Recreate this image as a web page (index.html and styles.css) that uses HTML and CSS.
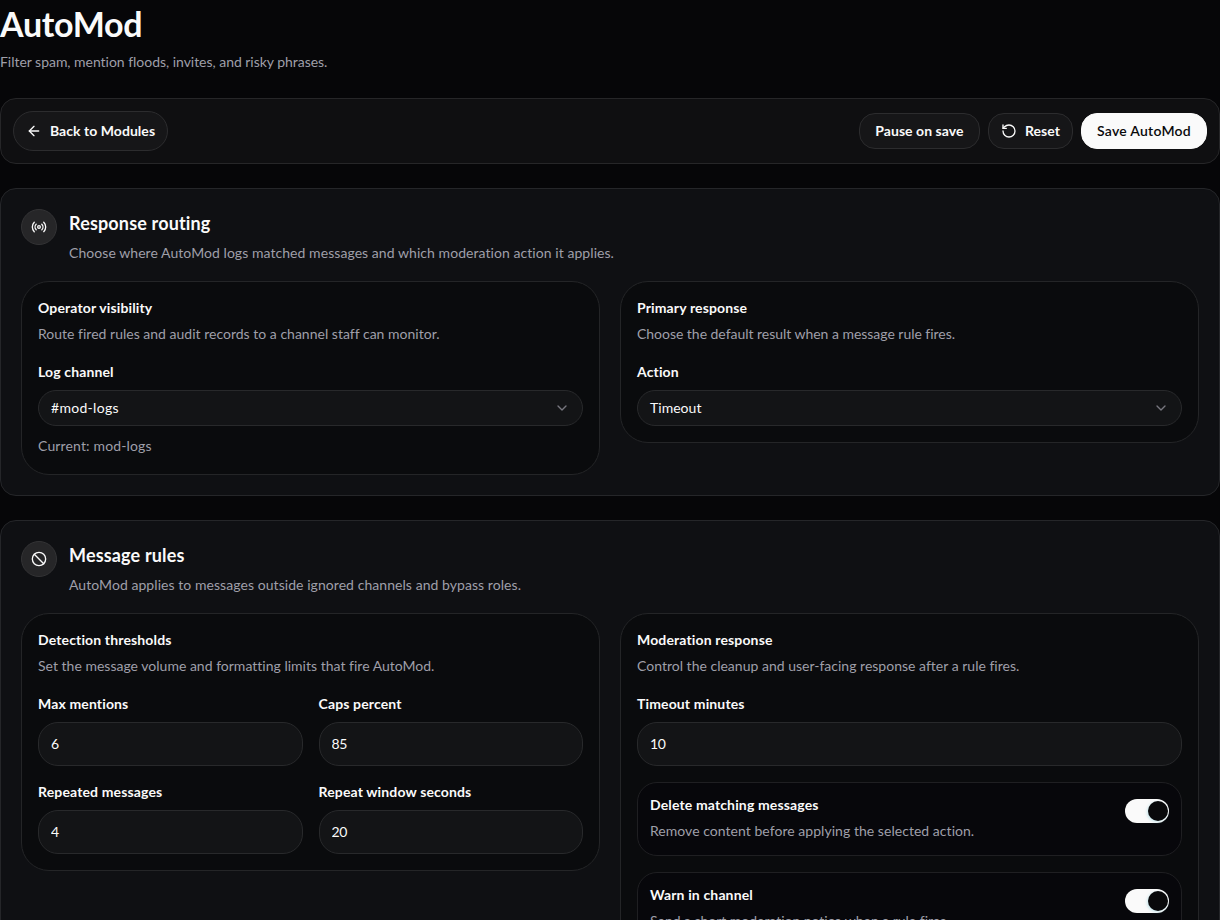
FILE: index.html
```
<!DOCTYPE html>
<html lang="en">

<head>
    <meta charset="utf-8">
    <meta name="viewport" content="width=device-width, initial-scale=1.0">
    <title>AutoMod</title>
    <link rel="stylesheet" href="styles.css">
</head>

<body>
    <header class="page-header">
        <h1>AutoMod</h1>
        <p class="filter-text">Filter spam, mention floods, invites, and risky phrases.</p>
    </header>

    <!-- toolbar -->
    <div class="toolbar">
        <a class="btn btn-back" href="#">
            <svg class="icon" viewBox="0 0 24 24"><path d="m12 19-7-7 7-7"/><path d="M19 12H5"/></svg>
            Back to Modules
        </a>
        <div class="toolbar-actions">
            <button class="btn" type="button">Pause on save</button>
            <button class="btn btn-reset" type="button">
                <svg class="icon" viewBox="0 0 24 24"><path d="M3 12a9 9 0 1 0 9-9 9.75 9.75 0 0 0-6.74 2.74L3 8"/><path d="M3 3v5h5"/></svg>
                Reset
            </button>
            <button class="btn btn-primary" type="button">Save AutoMod</button>
        </div>
    </div>

    <!-- response routing -->
    <section class="section">
        <div class="section-header">
            <div class="section-icon">
                <svg class="icon" viewBox="0 0 24 24"><path d="M4.9 19.1C1 15.2 1 8.8 4.9 4.9"/><path d="M7.8 16.2c-2.3-2.3-2.3-6.1 0-8.5"/><circle cx="12" cy="12" r="2"/><path d="M16.2 7.8c2.3 2.3 2.3 6.1 0 8.5"/><path d="M19.1 4.9C23 8.8 23 15.1 19.1 19"/></svg>
            </div>
            <div>
                <h2>Response routing</h2>
                <p class="wide-text">Choose where AutoMod logs matched messages and which moderation action it applies.</p>
            </div>
        </div>
        <div class="cards">
            <div class="card">
                <h3>Operator visibility</h3>
                <p>Route fired rules and audit records to a channel staff can monitor.</p>
                <div class="field">
                    <span class="label">Log channel</span>
                    <div class="select mod-logs">#mod-logs
                        <svg class="icon" viewBox="0 0 24 24"><path d="m6 9 6 6 6-6"/></svg>
                    </div>
                    <p class="current">Current: mod-logs</p>
                </div>
            </div>
            <div class="card">
                <h3>Primary response</h3>
                <p class="tight-text">Choose the default result when a message rule fires.</p>
                <div class="field">
                    <span class="label">Action</span>
                    <div class="select">Timeout
                        <svg class="icon" viewBox="0 0 24 24"><path d="m6 9 6 6 6-6"/></svg>
                    </div>
                </div>
            </div>
        </div>
    </section>

    <!-- message rules -->
    <section class="section">
        <div class="section-header">
            <div class="section-icon">
                <svg class="icon" viewBox="0 0 24 24"><circle cx="12" cy="12" r="10"/><path d="m4.9 4.9 14.2 14.2"/></svg>
            </div>
            <div>
                <h2>Message rules</h2>
                <p class="wide-text">AutoMod applies to messages outside ignored channels and bypass roles.</p>
            </div>
        </div>
        <div class="cards">
            <div class="card">
                <h3>Detection thresholds</h3>
                <p>Set the message volume and formatting limits that fire AutoMod.</p>
                <div class="field-grid">
                    <div class="field">
                        <label class="label" for="mentions">Max mentions</label>
                        <input class="input" id="mentions" type="text" value="6">
                    </div>
                    <div class="field">
                        <label class="label" for="caps">Caps percent</label>
                        <input class="input" id="caps" type="text" value="85">
                    </div>
                    <div class="field">
                        <label class="label" for="repeated">Repeated messages</label>
                        <input class="input" id="repeated" type="text" value="4">
                    </div>
                    <div class="field">
                        <label class="label" for="window">Repeat window seconds</label>
                        <input class="input" id="window" type="text" value="20">
                    </div>
                </div>
            </div>
            <div class="card">
                <h3>Moderation response</h3>
                <p>Control the cleanup and user-facing response after a rule fires.</p>
                <div class="field">
                    <label class="label" for="timeout">Timeout minutes</label>
                    <input class="input" id="timeout" type="text" value="10">
                </div>
                <div class="toggle-card">
                    <div>
                        <h3>Delete matching messages</h3>
                        <p class="toggle-text">Remove content before applying the selected action.</p>
                    </div>
                    <div class="switch"><span class="knob"></span></div>
                </div>
                <div class="toggle-card">
                    <div>
                        <h3>Warn in channel</h3>
                        <p class="tight-text">Send a short moderation notice when a rule fires.</p>
                    </div>
                    <div class="switch"><span class="knob"></span></div>
                </div>
            </div>
        </div>
    </section>
</body>

</html>
```
FILE: styles.css
```
* {
    box-sizing: border-box;
    margin: 0;
    padding: 0;
}

body {
    height: 920px;
    overflow: hidden;
    background: #060608;
    color: #fafafa;
    font-family: Lato, "Open Sans", sans-serif;
    font-size: 14px;
    line-height: 20px;
    letter-spacing: 0.03px;
    font-variant-ligatures: none;
}

h1 {
    font-size: 34px;
    font-weight: 700;
    line-height: 40px;
    letter-spacing: -0.3px;
}

h2 {
    font-size: 18px;
    font-weight: 700;
    line-height: 28px;
    letter-spacing: 0.16px;
}

h3,
.label {
    font-size: 14px;
    font-weight: 700;
    line-height: 20px;
    letter-spacing: 0.14px;
}

p {
    color: #9f9fa9;
    line-height: 24px;
}

.icon {
    width: 16px;
    height: 16px;
    fill: none;
    stroke: currentColor;
    stroke-width: 2;
    stroke-linecap: round;
    stroke-linejoin: round;
    flex-shrink: 0;
}

.page-header {
    padding-top: 4px;
    height: 98px;
}

.page-header p {
    margin-top: 6px;
}

.filter-text {
    letter-spacing: -0.03px;
}

/* toolbar */
.toolbar {
    display: flex;
    align-items: center;
    justify-content: space-between;
    height: 66px;
    padding: 12px;
    border: 1px solid #262628;
    border-radius: 16px;
    background: #0f0f11;
}

.toolbar-actions {
    display: flex;
    gap: 8px;
}

.btn {
    display: flex;
    align-items: center;
    justify-content: center;
    height: 36px;
    padding: 0 15.5px 1px;
    border: 1px solid #2c2c2e;
    border-radius: 16px;
    background: #161618;
    color: #fafafa;
    font-family: inherit;
    font-size: 14px;
    font-weight: 700;
    line-height: 20px;
    letter-spacing: 0.05px;
    text-decoration: none;
    white-space: nowrap;
}

.btn-back {
    height: 40px;
    width: 155px;
    padding: 0;
    gap: 8px;
    border-radius: 20px;
}

.btn-reset {
    width: 85px;
    padding: 0 0 1px;
    gap: 8px;
}

.btn-primary {
    width: 126px;
    background: #fafafa;
    border-color: #fafafa;
    color: #09090b;
    font-weight: 600;
    letter-spacing: 0.25px;
}

/* sections */
.section {
    margin-top: 24px;
    padding: 20px;
    border: 1px solid #252629;
    border-radius: 16px;
    background: #0f1013;
}

.section-header {
    display: flex;
    gap: 12px;
    margin-bottom: 16px;
}

.section-header p {
    margin-top: 4px;
}

.section-icon {
    display: flex;
    align-items: center;
    justify-content: center;
    width: 36px;
    height: 36px;
    border: 1px solid #333335;
    border-radius: 50%;
    background: #262628;
}

.wide-text {
    letter-spacing: 0.06px;
}

.cards {
    display: grid;
    grid-template-columns: 1fr 1fr;
    align-items: start;
    gap: 20px;
}

.card {
    padding: 16px;
    border: 1px solid #242527;
    border-radius: 28px;
    background: #0a0b0d;
}

.card p {
    margin-top: 4px;
    letter-spacing: 0.01px;
}

.card .tight-text {
    letter-spacing: -0.03px;
}

.card .toggle-text {
    letter-spacing: 0.04px;
}

/* fields */
.field {
    display: flex;
    flex-direction: column;
    gap: 8px;
    margin-top: 16px;
}

.field-grid {
    display: grid;
    grid-template-columns: 1fr 1fr;
    column-gap: 16px;
}

.field .current {
    margin-top: 0;
    letter-spacing: 0.15px;
}

.select,
.input {
    width: 100%;
    padding: 0 12px;
    border: 1px solid #28292b;
    background: #131416;
    color: #fafafa;
    font-family: inherit;
    font-size: 14px;
    letter-spacing: 0.03px;
}

.select {
    display: flex;
    align-items: center;
    justify-content: space-between;
    height: 36px;
    border-radius: 18px;
}

.select .icon {
    color: #77777f;
}

.mod-logs {
    letter-spacing: 0.3px;
}

.input {
    height: 44px;
    padding-bottom: 2px;
    border-radius: 20px;
    letter-spacing: -0.4px;
}

/* toggles */
.toggle-card {
    display: flex;
    justify-content: space-between;
    margin-top: 16px;
    padding: 12px;
    height: 74px;
    border: 1px solid #1f1f22;
    border-radius: 20px;
    background: #07070b;
}

.switch {
    display: flex;
    justify-content: flex-end;
    width: 44px;
    height: 24px;
    margin-top: 4px;
    padding: 2px 1px;
    border-radius: 12px;
    background: #fafafa;
}

.knob {
    width: 20px;
    height: 20px;
    border-radius: 50%;
    background: #09090b;
    box-shadow: -1px 1px 3px rgba(120, 200, 215, 0.4);
}
```
